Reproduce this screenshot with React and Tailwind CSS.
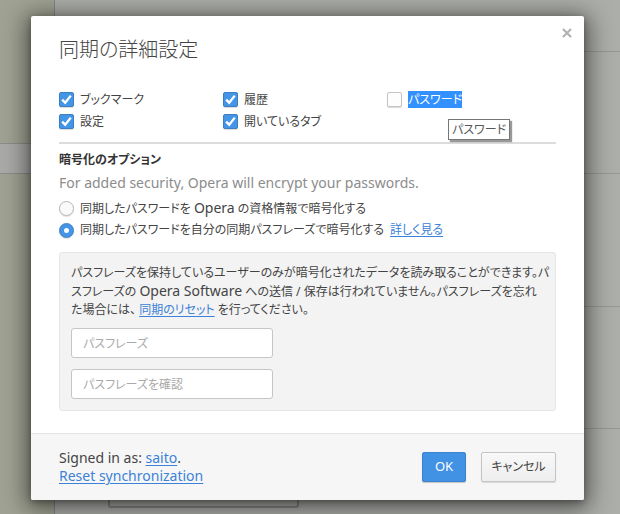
import { useState } from "react";

const link = "text-[#3c82d8] underline underline-offset-2 decoration-1";

function CheckItem({ id, label, defaultChecked, selected }) {
  return (
    <div className="flex h-[22px] items-center gap-[6px]">
      <input
        id={id}
        type="checkbox"
        defaultChecked={defaultChecked}
        className="peer sr-only"
      />
      <label
        htmlFor={id}
        className="group flex items-center gap-[6px] whitespace-nowrap [&>span:first-child]:border-[#c4c4c4] [&>span:first-child]:bg-[#fdfdfd] peer-checked:[&>span:first-child]:border-[#3a7fc4] peer-checked:[&>span:first-child]:bg-[#4595e6] [&_svg]:invisible peer-checked:[&_svg]:visible"
      >
        <span className="flex size-[15px] items-center justify-center rounded-[2px] border shadow-[0_1px_1px_rgba(0,0,0,0.15)]">
          <svg viewBox="0 0 13 13" className="size-[13px]" fill="none" stroke="#fff" strokeWidth="2.3">
            <path d="M2.2 6.6 L5.2 9.8 L10.8 2.6" />
          </svg>
        </span>
        <span className={selected ? "bg-[#3390ff] leading-[17px] text-white" : "leading-[17px]"}>{label}</span>
      </label>
    </div>
  );
}

function RadioItem({ id, checked, onChange, children, after }) {
  return (
    <div className="flex h-[22px] items-center gap-[6px] whitespace-nowrap leading-[18px]">
      <input
        id={id}
        name="encryption"
        type="radio"
        checked={checked}
        onChange={onChange}
        className="size-[15px] shrink-0 appearance-none rounded-full border border-[#b8b8b8] bg-[#fafafa] shadow-[0_1px_1px_rgba(0,0,0,0.12)] checked:border-[#3a7fc4] checked:bg-[radial-gradient(circle,#fff_0_2px,#4595e6_3px)]"
      />
      <label htmlFor={id}>{children}</label>
      {after}
    </div>
  );
}

function SettingsBackdrop() {
  return (
    <div className="col-start-1 row-start-1 flex" aria-hidden="true">
      <div className="w-[55px] border-r border-[#858780] bg-[#a0a393] pt-[143px]">
        <div className="h-[31px] border-y border-[#8c8d88] bg-[#aaaaa9]" />
      </div>
      <div className="flex flex-1 flex-col bg-[#acaea9]">
        <div className="h-[52px] border-b border-[#969893]" />
        <div className="h-[122px] border-b border-[#969893]" />
        <div className="h-[133px] border-b border-[#969893]" />
        <div className="h-[122px] border-b border-[#969893]" />
        <div className="ml-[53px] mt-[50px] h-[29px] w-[191px] rounded-[3px] border-2 border-[#858682]" />
      </div>
    </div>
  );
}

export default function App() {
  const [mode, setMode] = useState("passphrase");
  return (
    <div className="grid min-h-screen grid-cols-1 overflow-hidden font-['Noto_Sans','Noto_Sans_CJK_JP',sans-serif] text-[12px] text-[#444] [font-feature-settings:'palt']">
      <SettingsBackdrop />
      <main className="relative col-start-1 row-start-1 mb-[14px] ml-[31px] mr-[36px] mt-[16px] self-start rounded-[2px] bg-white shadow-[0_4px_23px_5px_rgba(0,0,0,0.5),0_2px_6px_rgba(0,0,0,0.3)]">
        <button aria-label="Close" className="absolute right-[11px] top-[11px] flex size-[12px] items-center justify-center">
          <svg viewBox="0 0 10 10" className="size-[10px]" stroke="#b2b2b2" strokeWidth="2.2">
            <path d="M1 1 L9 9 M9 1 L1 9" />
          </svg>
        </button>

        <div className="px-7 pb-[22px] pt-5">
          <h1 className="text-[20px] font-light leading-7 text-[#444]">同期の詳細設定</h1>

          <div className="relative mt-6 grid grid-cols-[164px_164px_1fr] border-b-2 border-[#dcdcdc] pb-[10px]">
            <CheckItem id="bookmarks" label="ブックマーク" defaultChecked />
            <CheckItem id="history" label="履歴" defaultChecked />
            <CheckItem id="passwords" label="パスワード" selected />
            <CheckItem id="settings" label="設定" defaultChecked />
            <CheckItem id="tabs" label="開いているタブ" defaultChecked />
            <div role="tooltip" className="absolute left-[389px] top-[31px] border border-[#767676] bg-white px-[3px] leading-[19px] text-[#575757] shadow-[2px_2px_1px_rgba(0,0,0,0.4)]">
              パスワード
            </div>
          </div>

          <h2 className="mt-[6px] font-bold leading-5 text-[#333]">暗号化のオプション</h2>
          <p className="mt-[3px] text-[14px] leading-5 text-[#8c8c8c]">
            For added security, Opera will encrypt your passwords.
          </p>

          <div className="mt-[4px]">
            <RadioItem id="credentials" checked={mode === "credentials"} onChange={() => setMode("credentials")}>
              同期したパスワードを <span className="text-[14px]">Opera</span> の資格情報で暗号化する
            </RadioItem>
            <RadioItem
              id="passphrase"
              checked={mode === "passphrase"}
              onChange={() => setMode("passphrase")}
              after={<a href="#more" className={link}>詳しく見る</a>}
            >
              同期したパスワードを自分の同期パスフレーズで暗号化する
            </RadioItem>
          </div>

          <section className="mt-[11px] rounded-[3px] border border-[#e6e6e6] bg-[#f3f3f3] px-[11px] pb-[11px] pt-[11px]">
            <p className="whitespace-nowrap leading-[18px]">
              パスフレーズを保持しているユーザーのみが暗号化されたデータを読み取ることができます。パ
              <br />
              スフレーズの <span className="text-[14px]">Opera Software</span> への送信 / 保存は行われていません。パスフレーズを忘れ
              <br />
              た場合には、 <a href="#reset" className={link}>同期のリセット</a> を行ってください。
            </p>
            <div className="mt-[9px] flex flex-col gap-[11px]">
              <input type="password" aria-label="パスフレーズ" placeholder="パスフレーズ" className="h-[30px] w-[202px] rounded-[3px] border border-[#c6c6c6] bg-white px-[11px] placeholder:text-[#aaa]" />
              <input type="password" aria-label="パスフレーズを確認" placeholder="パスフレーズを確認" className="h-[30px] w-[202px] rounded-[3px] border border-[#c6c6c6] bg-white px-[11px] placeholder:text-[#aaa]" />
            </div>
          </section>
        </div>

        <footer className="flex items-center justify-between rounded-b-[2px] border-t border-[#e4e4e4] bg-[#f6f6f6] px-7 py-[15px]">
          <div className="text-[14px] leading-[18px]">
            <p>
              Signed in as: <a href="#account" className={link}>saito</a>.
            </p>
            <a href="#resetsync" className={link}>Reset synchronization</a>
          </div>
          <div className="flex gap-[15px]">
            <button className="h-[30px] w-[44px] rounded-[2px] border border-[#3b83cf] bg-[#4191e4] text-[13px] text-white shadow-[0_1px_1px_rgba(0,0,0,0.2)]">OK</button>
            <button className="h-[30px] w-[75px] rounded-[2px] border border-[#c4c4c4] bg-linear-to-b from-[#f8f8f8] to-[#eeeeee] shadow-[0_1px_1px_rgba(0,0,0,0.12)]">キャンセル</button>
          </div>
        </footer>
      </main>
    </div>
  );
}
